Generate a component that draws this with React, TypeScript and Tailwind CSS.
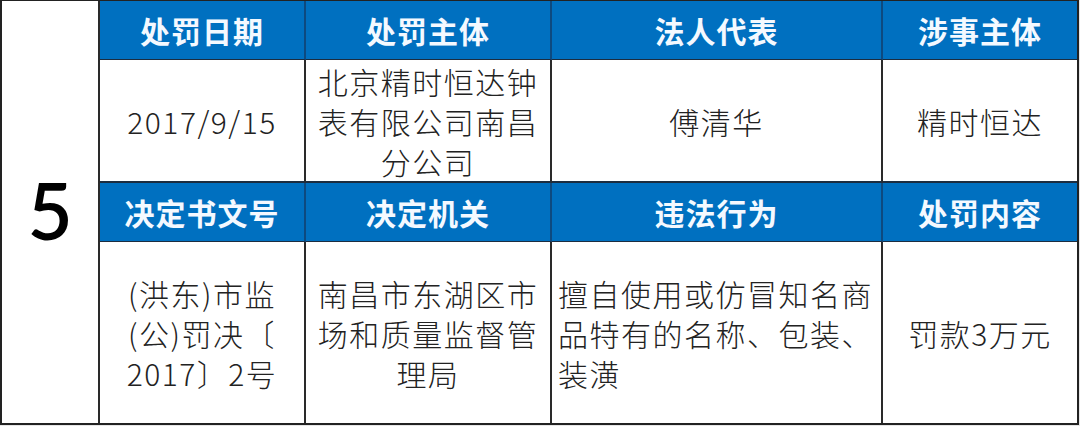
import React from "react"

function Head({ children, last }: { children: React.ReactNode; last?: boolean }) {
  return (
    <div
      className={`flex items-center justify-center bg-[#0070c0] text-[#f4f9ff] text-[30px] font-bold tracking-[1px] border-b border-[#1c2d40] font-['Noto_Sans_CJK_SC','Noto_Sans',sans-serif] ${
        last ? "" : "border-r-2 border-r-[#0d4a80]"
      }`}
    >
      {children}
    </div>
  )
}

function Cell({
  children,
  last,
  align = "center",
  bottom,
}: {
  children: React.ReactNode
  last?: boolean
  align?: "center" | "left"
  bottom?: boolean
}) {
  return (
    <div
      className={`flex items-center bg-white px-[6px] text-[#222] text-[30px] font-light leading-[40px] tracking-[1.5px] font-['Noto_Sans_CJK_SC','Noto_Sans',sans-serif] ${
        align === "center" ? "justify-center text-center" : "justify-start text-left"
      } ${last ? "" : "border-r-2 border-r-[#2a2a2a]"} ${bottom ? "" : "border-b-2 border-b-[#1c2d40]"}`}
    >
      <div>{children}</div>
    </div>
  )
}

export default function App() {
  return (
    <div className="w-[1080px] h-[426px] bg-[#e6e6e6]">
      <div className="w-[1079px] h-[425px] bg-white border-l-2 border-r-2 border-b-2 border-t border-[#222] grid grid-cols-[98px_206px_246px_331px_194px] grid-rows-[59px_123px_59px_181px]">
        {/* row number */}
        <div className="row-span-4 flex items-center justify-center border-r-2 border-r-[#2a2a2a] pb-[4px] text-[78px] font-semibold text-black font-['Lato','Open_Sans',sans-serif]">
          5
        </div>

        <Head>处罚日期</Head>
        <Head>处罚主体</Head>
        <Head>法人代表</Head>
        <Head last>涉事主体</Head>

        <Cell>2017/9/15</Cell>
        <Cell>北京精时恒达钟表有限公司南昌分公司</Cell>
        <Cell>傅清华</Cell>
        <Cell last>精时恒达</Cell>

        <Head>决定书文号</Head>
        <Head>决定机关</Head>
        <Head>违法行为</Head>
        <Head last>处罚内容</Head>

        <Cell bottom>
          (洪东)市监
          <br />
          (公)罚决〔
          <br />
          2017〕2号
        </Cell>
        <Cell bottom>南昌市东湖区市场和质量监督管理局</Cell>
        <Cell bottom align="left">
          擅自使用或仿冒知名商品特有的名称、包装、装潢
        </Cell>
        <Cell bottom last>
          罚款3万元
        </Cell>
      </div>
    </div>
  )
}
